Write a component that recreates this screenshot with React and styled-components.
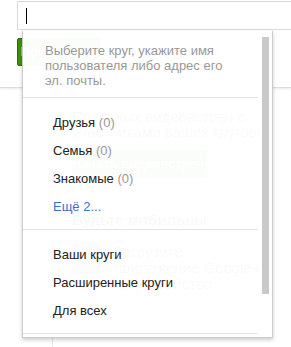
import styled, { createGlobalStyle } from 'styled-components'

const Global = createGlobalStyle`
  html, body {
    margin: 0;
    padding: 0;
    background: #fff;
  }
  body {
    font-family: 'Liberation Sans', Arial, sans-serif;
    font-size: 13px;
  }
`

const Page = styled.div`
  position: relative;
  width: 291px;
  height: 347px;
  overflow: hidden;
  background: #fff;
`

const Header = styled.div`
  height: 86px;
  padding: 1px 0 0 17px;
  border-bottom: 1px solid #dcdcdc;
  box-shadow: 0 1px 2px rgba(0, 0, 0, 0.08);
  display: flex;
  flex-direction: column;
  gap: 8px;
`

const SearchBox = styled.div`
  width: 400px;
  height: 27px;
  border: 1px solid #d9d9d9;
  display: flex;
  align-items: center;
  padding-left: 8px;
`

const Caret = styled.span`
  width: 1px;
  height: 16px;
  background: #000;
`

const GreenButton = styled.div`
  width: 81px;
  height: 26px;
  background: #3d9400;
  border: 1px solid #29691d;
  border-radius: 2px;
  color: #fff;
  font-weight: bold;
  font-size: 13px;
  line-height: 26px;
  text-align: center;
`

const Main = styled.div`
  display: flex;
  height: 260px;
`

const Rail = styled.div`
  width: 52px;
  border-right: 1px solid #e5e5e5;
`

const Content = styled.div`
  padding: 21px 0 0 19px;
  display: flex;
  flex-direction: column;
  align-items: flex-start;
  color: #222;
`

const Lead = styled.div`
  width: 200px;
  font-size: 15px;
  line-height: 15px;
`

const StartButton = styled.div`
  margin-top: 11px;
  width: 135px;
  height: 28px;
  background: #3d9400;
  border-radius: 2px;
  color: #fff;
  font-weight: bold;
  font-size: 13px;
  line-height: 28px;
  text-align: center;
  white-space: nowrap;
`

const SubTitle = styled.div`
  margin-top: 33px;
  font-size: 15px;
  font-weight: bold;
`

const AppRow = styled.div`
  margin-top: 16px;
  display: flex;
  gap: 12px;
`

const AppIcon = styled.div`
  width: 30px;
  height: 30px;
  border-radius: 4px;
  background: #777;
`

const AppText = styled.div`
  width: 150px;
  font-size: 15px;
  line-height: 16px;
`

const Dropdown = styled.div`
  position: absolute;
  top: 31px;
  left: 22px;
  width: 249px;
  display: flex;
  background: rgba(255, 255, 255, 0.975);
  border: 1px solid rgba(0, 0, 0, 0.2);
  border-top: none;
  box-shadow: 0 2px 4px rgba(0, 0, 0, 0.2);
`

const List = styled.div`
  flex: 1;
  display: flex;
  flex-direction: column;
  padding-bottom: 3px;
`

const Hint = styled.div`
  padding: 12px 22px 9px;
  color: #999;
  line-height: 15px;
  border-bottom: 1px solid #e5e5e5;
`

const Section = styled.div`
  padding: 11px 0 8px;
  border-bottom: 1px solid #e5e5e5;
`

const Item = styled.div`
  height: 28px;
  line-height: 28px;
  padding-left: 30px;
  color: ${(p) => (p.$link ? '#3b6fd7' : '#222')};
  white-space: nowrap;
`

const Count = styled.span`
  color: #999;
`

const Track = styled.div`
  width: 14px;
  padding: 6px 3px 0 4px;
  box-sizing: border-box;
`

const Thumb = styled.div`
  width: 7px;
  height: 257px;
  background: #c9c9c9;
`

const circles = [
  { name: 'Друзья', count: 0 },
  { name: 'Семья', count: 0 },
  { name: 'Знакомые', count: 0 },
]

const scopes = ['Ваши круги', 'Расширенные круги', 'Для всех']

export default function App() {
  return (
    <>
      <Global />
      <Page>
        <Header>
          <SearchBox>
            <Caret />
          </SearchBox>
          <GreenButton>Пригласить</GreenButton>
        </Header>
        <Main>
          <Rail />
          <Content>
            <Lead>Приятных видеовстреч с участниками ваших кругов!</Lead>
            <StartButton>Начать видеовстречу</StartButton>
            <SubTitle>Будьте мобильны</SubTitle>
            <AppRow>
              <AppIcon />
              <AppText>Загрузите приложение Google+ на устройство</AppText>
            </AppRow>
          </Content>
        </Main>
        <Dropdown>
          <List>
            <Hint>Выберите круг, укажите имя пользователя либо адрес его эл. почты.</Hint>
            <Section>
              {circles.map((c) => (
                <Item key={c.name}>
                  {c.name} <Count>({c.count})</Count>
                </Item>
              ))}
              <Item $link>Ещё 2...</Item>
            </Section>
            <Section>
              {scopes.map((s) => (
                <Item key={s}>{s}</Item>
              ))}
            </Section>
          </List>
          <Track>
            <Thumb />
          </Track>
        </Dropdown>
      </Page>
    </>
  )
}
